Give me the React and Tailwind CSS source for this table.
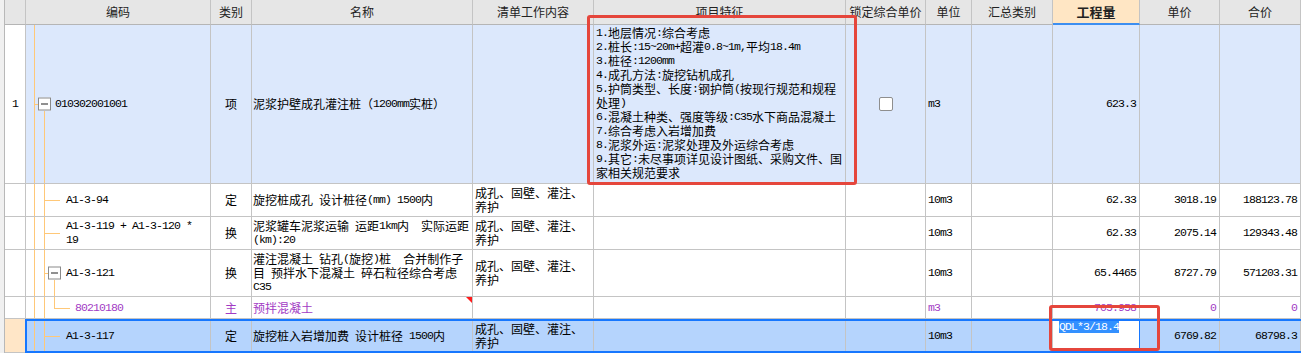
import clsx from 'clsx'

const mono = "font-['Liberation_Mono'] text-[11.5px] tracking-[-0.9px]"
const line = 'bg-[#ffc878]'
const purple = 'text-[#a23bc4]'

const W = {
  rn: 'w-[21px]',
  code: 'w-[185px]',
  type: 'w-[41px]',
  name: 'w-[221px]',
  work: 'w-[121px]',
  feat: 'w-[252px]',
  lock: 'w-[80px]',
  unit: 'w-[46px]',
  sum: 'w-[81px]',
  qty: 'w-[87px]',
  price: 'w-[80px]',
  total: 'w-[81px]',
}

const headers = [
  ['rn', ''],
  ['code', '编码'],
  ['type', '类别'],
  ['name', '名称'],
  ['work', '清单工作内容'],
  ['feat', '项目特征'],
  ['lock', '锁定综合单价'],
  ['unit', '单位'],
  ['sum', '汇总类别'],
  ['qty', '工程量'],
  ['price', '单价'],
  ['total', '合价'],
]

const features = [
  '1.地层情况:综合考虑',
  '2.桩长:15~20m+超灌0.8~1m,平均18.4m',
  '3.桩径:1200mm',
  '4.成孔方法:旋挖钻机成孔',
  '5.护筒类型、长度:钢护筒(按现行规范和规程',
  '处理)',
  '6.混凝土种类、强度等级:C35水下商品混凝土',
  '7.综合考虑入岩增加费',
  '8.泥浆外运:泥浆处理及外运综合考虑',
  '9.其它:未尽事项详见设计图纸、采购文件、国',
  '家相关规范要求',
]

const WORK = ['成孔、固壁、灌注、', '养护']

const rows = [
  {
    h: 'h-[33px]', tree: 'leaf', code: ['A1-3-94'], type: '定',
    name: ['旋挖桩成孔 设计桩径(mm) 1500内'], work: WORK,
    unit: '10m3', qty: '62.33', price: '3018.19', total: '188123.78',
  },
  {
    h: 'h-[33px]', tree: 'leaf', code: ['A1-3-119 + A1-3-120 *', '19'], type: '换',
    name: ['泥浆罐车泥浆运输 运距1km内  实际运距', '(km):20'], work: WORK,
    unit: '10m3', qty: '62.33', price: '2075.14', total: '129343.48',
  },
  {
    h: 'h-[47px]', tree: 'open', code: ['A1-3-121'], type: '换',
    name: ['灌注混凝土 钻孔(旋挖)桩  合并制作子', '目 预拌水下混凝土 碎石粒径综合考虑', 'C35'], work: WORK,
    unit: '10m3', qty: '65.4465', price: '8727.79', total: '571203.31',
  },
  {
    h: 'h-[22px]', tree: 'child', code: ['80210180'], type: '主',
    name: ['预拌混凝土'], work: null, purple: true, flag: true,
    unit: 'm3', qty: '705.958', price: '0', total: '0',
  },
  {
    h: 'h-[34px]', tree: 'leaf', code: ['A1-3-117'], type: '定',
    name: ['旋挖桩入岩增加费 设计桩径 1500内'], work: WORK, selected: true,
    unit: '10m3', qty: null, price: '6769.82', total: '68798.3',
  },
]

// ASCII runs get the narrow mono face, like the half-width glyphs of the original font
function Mixed({ text }) {
  return text
    .split(/([\x20-\x7e]+)/)
    .filter(Boolean)
    .map((part, i) =>
      /^[\x20-\x7e]+$/.test(part) ? (
        <span key={i} className={mono}>{part}</span>
      ) : (
        <span key={i}>{part}</span>
      )
    )
}

function Lines({ lines }) {
  return (
    <div>
      {lines.map((l, i) => (
        <div key={i} className="flex h-[14px] items-center whitespace-pre leading-[14px]">
          <Mixed text={l} />
        </div>
      ))}
    </div>
  )
}

function Cell({ w, className, children }) {
  return (
    <div className={clsx(W[w], 'flex shrink-0 items-center overflow-hidden border-r border-b border-[#c4c4c4]', className)}>
      {children}
    </div>
  )
}

function Toggle({ className }) {
  return (
    <span className={clsx('flex h-[13px] w-[13px] items-center justify-center border border-[#8a8a8a] bg-white', className)}>
      <span className="h-px w-[7px] bg-[#222]" />
    </span>
  )
}

function TreeLines({ kind }) {
  return (
    <>
      <span className={clsx('absolute left-[8px] top-[-1px] bottom-[-1px] w-px', line)} />
      <span className={clsx('absolute left-[18px] top-[-1px] bottom-[-1px] w-px', line)} />
      {kind === 'leaf' && <span className={clsx('absolute left-[18px] top-1/2 h-px w-[16px]', line)} />}
      {kind === 'open' && (
        <>
          <span className={clsx('absolute left-[18px] top-1/2 h-px w-[4px]', line)} />
          <Toggle className="absolute left-[22px] top-1/2 -translate-y-1/2" />
          <span className={clsx('absolute left-[28px] top-[calc(50%+7px)] bottom-[-1px] w-px', line)} />
        </>
      )}
      {kind === 'child' && (
        <>
          <span className={clsx('absolute left-[28px] top-[-1px] h-[calc(50%+1px)] w-px', line)} />
          <span className={clsx('absolute left-[28px] top-1/2 h-px w-[16px]', line)} />
        </>
      )}
    </>
  )
}

export default function App() {
  return (
    <div className="flex h-[353px] w-[1301px] overflow-hidden bg-[#f0f0f0] font-['Noto_Sans_CJK_SC',sans-serif] text-[12px] text-black">
      <div className="w-[5px] shrink-0 border-r border-[#b8b8b8] bg-[#f0f0f0]" />

      <div className="relative flex flex-col">
        {/* header */}
        <div className="flex h-[25px] bg-[#e6e6e6]">
          {headers.map(([key, label]) => (
            <div
              key={key}
              className={clsx(
                W[key],
                'flex shrink-0 items-center justify-center overflow-hidden whitespace-nowrap border-r border-[#c4c4c4] text-[#222]',
                key === 'qty'
                  ? 'border-b-2 border-b-[#3d8ef0] bg-[#ffe6c4] text-[13px] font-bold'
                  : 'border-b border-b-[#b5b5b5]'
              )}
            >
              {label}
            </div>
          ))}
        </div>

        {/* row 1 */}
        <div className="flex h-[159px] bg-[#dce8fc]">
          <Cell w="rn" className="justify-center bg-white">
            <span className={mono}>1</span>
          </Cell>
          <Cell w="code" className="relative pl-[29px]">
            <span className={clsx('absolute left-[8px] top-0 bottom-[-1px] w-px', line)} />
            <span className={clsx('absolute left-[8px] top-1/2 h-px w-[4px]', line)} />
            <Toggle className="absolute left-[12px] top-1/2 -translate-y-1/2" />
            <span className={clsx('absolute left-[18px] top-[calc(50%+7px)] bottom-[-1px] w-px', line)} />
            <span className={mono}>010302001001</span>
          </Cell>
          <Cell w="type" className="justify-center">项</Cell>
          <Cell w="name" className="pl-[1px]">
            <Lines lines={['泥浆护壁成孔灌注桩（1200mm实桩）']} />
          </Cell>
          <Cell w="work" />
          <Cell w="feat" className="items-start pl-[2px] pt-[1px]">
            <Lines lines={features} />
          </Cell>
          <Cell w="lock" className="justify-center">
            <span className="h-[14px] w-[14px] rounded-[2px] border border-[#8e8e8e] bg-white" />
          </Cell>
          <Cell w="unit" className="pl-[2px]">
            <span className={mono}>m3</span>
          </Cell>
          <Cell w="sum" />
          <Cell w="qty" className="justify-end pr-[3px]">
            <span className={mono}>623.3</span>
          </Cell>
          <Cell w="price" />
          <Cell w="total" />
        </div>

        {rows.map((r, i) => (
          <div key={i} className={clsx('relative flex', r.h, r.selected ? 'bg-[#b5d4fd]' : 'bg-white')}>
            <Cell w="rn" className={r.selected ? 'bg-[#ffe6c7]' : 'bg-white'} />
            <Cell w="code" className={clsx('relative', r.tree === 'child' ? 'pl-[49px]' : 'pl-[40px]', r.purple && purple)}>
              <TreeLines kind={r.tree} />
              <div className={mono}>
                {r.code.map((c, j) => (
                  <div key={j} className="h-[14px] whitespace-pre leading-[14px]">{c}</div>
                ))}
              </div>
            </Cell>
            <Cell w="type" className={clsx('justify-center', r.purple && purple)}>{r.type}</Cell>
            <Cell w="name" className={clsx('relative pl-[1px]', r.purple && purple)}>
              <Lines lines={r.name} />
              {r.flag && (
                <span className="absolute right-0 top-0 h-0 w-0 border-t-[6px] border-l-[6px] border-t-[#ff1a1a] border-l-transparent" />
              )}
            </Cell>
            <Cell w="work" className="pl-[2px]">{r.work && <Lines lines={r.work} />}</Cell>
            <Cell w="feat" />
            <Cell w="lock" />
            <Cell w="unit" className={clsx('pl-[2px]', r.purple && purple)}>
              <span className={mono}>{r.unit}</span>
            </Cell>
            <Cell w="sum" />
            {r.qty === null ? (
              <Cell w="qty" className="items-start border-r-[#1677ff] bg-white pl-[6px] pt-[2px]">
                <span className={clsx(mono, 'bg-[#3390ff] leading-[12px] text-white')}>QDL*3/18.4</span>
              </Cell>
            ) : (
              <Cell w="qty" className={clsx('justify-end pr-[3px]', r.purple && purple)}>
                <span className={mono}>{r.qty}</span>
              </Cell>
            )}
            <Cell w="price" className={clsx('justify-end pr-[3px]', r.purple && purple)}>
              <span className={mono}>{r.price}</span>
            </Cell>
            <Cell w="total" className={clsx('justify-end pr-[3px]', r.purple && purple)}>
              <span className={mono}>{r.total}</span>
            </Cell>
            {r.selected && (
              <div className="pointer-events-none absolute left-[20px] right-0 top-0 bottom-0 border-2 border-r-0 border-[#1677ff]" />
            )}
          </div>
        ))}

        {/* red annotation frames */}
        <div className="pointer-events-none absolute left-[582px] top-[15px] h-[170px] w-[270px] rounded-[3px] border-[3px] border-[#e5463c]" />
        <div className="pointer-events-none absolute left-[1044px] top-[305px] h-[46px] w-[111px] rounded-[3px] border-[3px] border-[#e5463c]" />
      </div>
    </div>
  )
}
